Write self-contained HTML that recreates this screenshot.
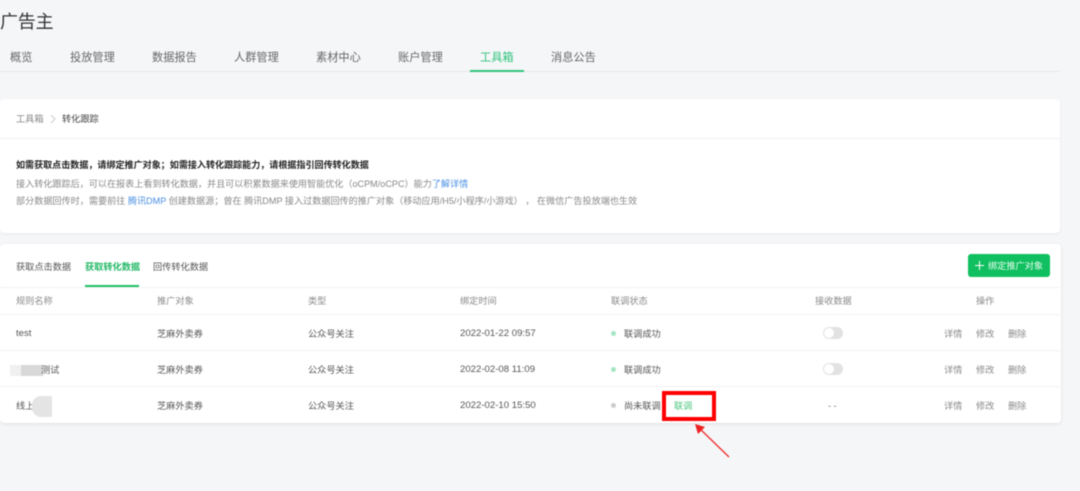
<!DOCTYPE html>
<html lang="zh"><head><meta charset="utf-8"><style>
html,body{margin:0;padding:0}
body{width:1080px;height:491px;overflow:hidden;background:#f5f6f8;position:relative;font-family:"Liberation Sans","Noto Sans CJK SC",sans-serif;color:#666}
#w{position:absolute;left:0;top:0;width:1080px;height:491px;overflow:hidden;background:#f5f6f8;filter:blur(.4px)}
.t{position:absolute;white-space:nowrap;line-height:14px;font-size:9.2px}
.n{font-size:11.2px;color:#666;top:50px;line-height:16px}
.b{position:absolute}
.h{color:#8a8a8a;top:294px}
.c{color:#555}
.g{color:#888}
.dt{font-size:9.6px}
a{color:#4a90e2;text-decoration:none}
.sw{position:absolute;width:20px;height:12px;border-radius:6px;background:#e2e2e2}
.sw i{position:absolute;left:1px;top:1px;width:10px;height:10px;border-radius:5px;background:#fff}
.d{position:absolute;width:5px;height:5px;border-radius:3px}
</style></head><body><div id="w">
<div class="t" style="left:0;top:11px;font-size:18px;line-height:22px;color:#333;letter-spacing:-.2px">广告主</div>
<div class="t n" style="left:10px">概览</div>
<div class="t n" style="left:70px">投放管理</div>
<div class="t n" style="left:152px">数据报告</div>
<div class="t n" style="left:234px">人群管理</div>
<div class="t n" style="left:316px">素材中心</div>
<div class="t n" style="left:398px">账户管理</div>
<div class="t n" style="left:480px;color:#2fc47c">工具箱</div>
<div class="t n" style="left:551px">消息公告</div>
<div class="b" style="left:0;top:71px;width:1060px;height:1px;background:#e4e6e8"></div>
<div class="b" style="left:470px;top:70px;width:54px;height:2px;background:#2fc47c"></div>

<div class="b" style="left:0;top:99px;width:1060px;height:134px;background:#fff;border-radius:4px;box-shadow:0 1px 3px rgba(0,0,0,.06)"></div>
<div class="b" style="left:0;top:138px;width:1060px;height:1px;background:#f0f0f0"></div>
<div class="t g" style="left:16px;top:112px">工具箱</div>
<svg class="b" style="left:49px;top:113px" width="8" height="12" viewBox="0 0 8 12"><path d="M2 2l4 4-4 4" fill="none" stroke="#bbb" stroke-width=".8"/></svg>
<div class="t" style="left:62px;top:112px;color:#444">转化跟踪</div>
<div class="t" style="left:16px;top:158px;font-size:9.05px;color:#222;font-weight:700">如需获取点击数据，请绑定推广对象；如需接入转化跟踪能力，请根据指引回传转化数据</div>
<div class="t" style="left:16px;top:177px;font-size:9.1px;color:#888">接入转化跟踪后，可以在报表上看到转化数据，并且可以积累数据来使用智能优化（oCPM/oCPC）能力<a href="#">了解详情</a></div>
<div class="t" style="left:16px;top:194px;font-size:9.12px;color:#888">部分数据回传时，需要前往 <a href="#">腾讯DMP</a> 创建数据源；曾在 腾讯DMP 接入过数据回传的推广对象（移动应用/H5/小程序/小游戏） ， 在微信广告投放端也生效</div>

<div class="b" style="left:0;top:244px;width:1061px;height:179px;background:#fff;border-radius:4px;box-shadow:0 1px 3px rgba(0,0,0,.1)"></div>
<div class="t" style="left:16px;top:260px;font-size:9.2px;color:#555">获取点击数据</div>
<div class="t" style="left:85px;top:260px;font-size:9.2px;color:#22b866;font-weight:700">获取转化数据</div>
<div class="t" style="left:153px;top:260px;font-size:9.2px;color:#555">回传转化数据</div>
<div class="b" style="left:85px;top:285px;width:54px;height:2px;background:#1fc164"></div>
<div class="b" style="left:0;top:287px;width:1060px;height:1px;background:#f2f2f2"></div>
<div class="b" style="left:968px;top:254px;width:82px;height:23px;background:#10bf5f;border-radius:3px"></div>
<svg class="b" style="left:974px;top:260px" width="11" height="11" viewBox="0 0 11 11"><path d="M5.5 1v9M1 5.5h9" stroke="#fff" stroke-width="1"/></svg>
<div class="t" style="left:988px;top:259px;font-size:9.2px;color:#e8fff2">绑定推广对象</div>

<div class="t h" style="left:16px">规则名称</div>
<div class="t h" style="left:157px">推广对象</div>
<div class="t h" style="left:308px">类型</div>
<div class="t h" style="left:460px">绑定时间</div>
<div class="t h" style="left:611px">联调状态</div>
<div class="t h" style="left:815px">接收数据</div>
<div class="t h" style="left:976px">操作</div>
<div class="b" style="left:0;top:314px;width:1060px;height:1px;background:#f2f2f2"></div>
<div class="b" style="left:0;top:350px;width:1060px;height:1px;background:#f2f2f2"></div>
<div class="b" style="left:0;top:386px;width:1060px;height:1px;background:#f2f2f2"></div>

<div class="t c" style="left:16px;top:327px;font-size:9.6px">test</div>
<div class="t c" style="left:157px;top:327px">芝麻外卖券</div>
<div class="t c" style="left:308px;top:327px">公众号关注</div>
<div class="t c dt" style="left:460px;top:327px">2022-01-22 09:57</div>
<div class="d" style="left:611px;top:331px;background:#a5e6c3"></div>
<div class="t c" style="left:624px;top:327px">联调成功</div>
<div class="sw" style="left:823px;top:327px"><i></i></div>
<div class="t g" style="left:944px;top:327px">详情</div>
<div class="t g" style="left:976px;top:327px">修改</div>
<div class="t g" style="left:1008px;top:327px">删除</div>

<div class="b" style="left:10px;top:365px;width:11px;height:11px;background:#f0f0f0"></div>
<div class="b" style="left:21px;top:365px;width:22px;height:11px;background:#d8d8d8"></div>
<div class="t c" style="left:41px;top:363px">测试</div>
<div class="t c" style="left:157px;top:363px">芝麻外卖券</div>
<div class="t c" style="left:308px;top:363px">公众号关注</div>
<div class="t c dt" style="left:460px;top:363px">2022-02-08 11:09</div>
<div class="d" style="left:611px;top:367px;background:#a5e6c3"></div>
<div class="t c" style="left:624px;top:363px">联调成功</div>
<div class="sw" style="left:823px;top:363px"><i></i></div>
<div class="t g" style="left:944px;top:363px">详情</div>
<div class="t g" style="left:976px;top:363px">修改</div>
<div class="t g" style="left:1008px;top:363px">删除</div>

<div class="t c" style="left:16px;top:399px">线上</div>
<div class="b" style="left:32px;top:396px;width:20px;height:21px;background:#e4e4e4;border-radius:9px 0 0 9px"></div>
<div class="t c" style="left:157px;top:399px">芝麻外卖券</div>
<div class="t c" style="left:308px;top:399px">公众号关注</div>
<div class="t c dt" style="left:460px;top:399px">2022-02-10 15:50</div>
<div class="d" style="left:611px;top:403px;background:#ccc"></div>
<div class="t c" style="left:624px;top:399px">尚未联调</div>
<div class="t" style="left:674px;top:399px;color:#4cc77f">联调</div>
<div class="t g" style="left:828px;top:399px;color:#777">- -</div>
<div class="t g" style="left:944px;top:399px">详情</div>
<div class="t g" style="left:976px;top:399px">修改</div>
<div class="t g" style="left:1008px;top:399px">删除</div>

<div class="b" style="left:662px;top:391px;width:46px;height:22px;border:4px solid #f00;box-sizing:content-box"></div>
<svg class="b" style="left:690px;top:420px" width="44" height="40" viewBox="0 0 44 40"><path d="M39 37L7 6" stroke="#ee3333" stroke-width="1.4" fill="none"/><path d="M5 4l10 3-7 7z" fill="#ee2222"/></svg>
</div></body></html>
